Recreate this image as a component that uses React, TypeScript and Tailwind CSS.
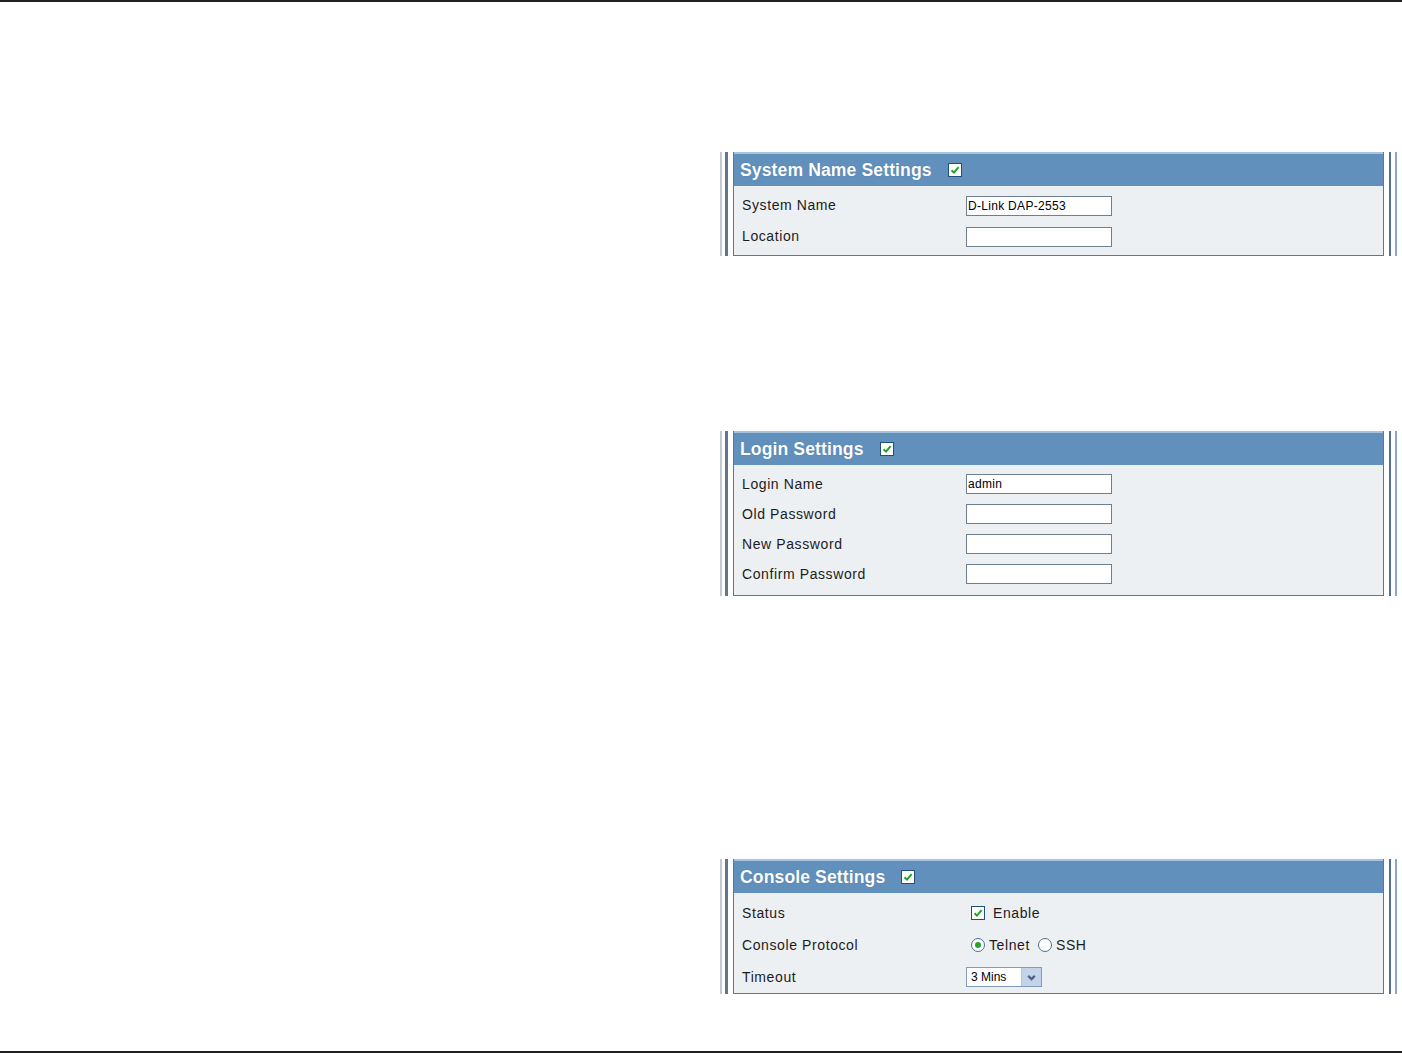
import type { ReactNode } from 'react'

const font = { fontFamily: '"Liberation Sans", Arial, sans-serif' }

function Check() {
  return (
    <span className="inline-flex h-[14px] w-[14px] items-center justify-center border border-[#1f4f7a] bg-white">
      <svg viewBox="0 0 10 10" className="h-[10px] w-[10px]">
        <path d="M1.5 5.2 L4 7.6 L8.6 2.2" fill="none" stroke="#1fa31f" strokeWidth="2" />
      </svg>
    </span>
  )
}

function Radio({ on }: { on?: boolean }) {
  return (
    <span className="inline-flex h-[14px] w-[14px] items-center justify-center rounded-full border border-[#4d6f8f] bg-white">
      {on && <span className="h-[6px] w-[6px] rounded-full bg-[#28a428]" />}
    </span>
  )
}

function TextBox({ value = '' }: { value?: string }) {
  return (
    <div className="flex h-[20px] w-[146px] items-center border border-[#6d7f90] bg-white px-[1px] text-[12px] tracking-[0.3px] text-black">
      {value}
    </div>
  )
}

function Row({ label, h, children }: { label: string; h: string; children: ReactNode }) {
  return (
    <div className={`flex items-center ${h}`}>
      <div className="w-[232px] pl-[8px] text-[14px] tracking-[0.6px] text-[#1c1c1c]">{label}</div>
      {children}
    </div>
  )
}

function Panel({ title, pad, children }: { title: string; pad: string; children: ReactNode }) {
  return (
    <div className="flex w-[678px]">
      {/* left rails */}
      <div className="flex w-[13px] shrink-0">
        <div className="w-[2px] bg-[#c3cad1]" />
        <div className="w-[3px]" />
        <div className="w-[3px] bg-[#63768a]" />
        <div className="flex-1" />
      </div>
      <div className="flex w-[651px] shrink-0 flex-col border-x border-b border-[#4f7ba6]">
        <div className="flex h-[34px] items-center gap-[16px] border-t-2 border-[#a6c4de] bg-[#6190bd] pl-[6px] text-[17.6px] font-bold tracking-[0.1px] text-white [text-shadow:0_0_1px_#3c6a96]">
          <span>{title}</span>
          <Check />
        </div>
        <div className={`flex flex-col bg-[#edf0f3] ${pad}`}>{children}</div>
      </div>
      {/* right rails */}
      <div className="flex w-[14px] shrink-0">
        <div className="w-[5px]" />
        <div className="w-[2px] bg-[#56728f]" />
        <div className="w-[4px]" />
        <div className="w-[2px] bg-[#86a9cc]" />
      </div>
    </div>
  )
}

export default function App() {
  return (
    <div className="flex h-[1054px] w-full flex-col bg-white" style={font}>
      <div className="h-[2px] bg-[#231f20]" />
      <div className="flex flex-1 flex-col pl-[720px]">
        <div className="mt-[150px]">
          <Panel title="System Name Settings" pad="pt-[4px] pb-[3px]">
            <Row label="System Name" h="h-[31px]">
              <TextBox value="D-Link DAP-2553" />
            </Row>
            <Row label="Location" h="h-[31px]">
              <TextBox />
            </Row>
          </Panel>
        </div>

        <div className="mt-[175px]">
          <Panel title="Login Settings" pad="pt-[4px] pb-[6px]">
            <Row label="Login Name" h="h-[30px]">
              <TextBox value="admin" />
            </Row>
            <Row label="Old Password" h="h-[30px]">
              <TextBox />
            </Row>
            <Row label="New Password" h="h-[30px]">
              <TextBox />
            </Row>
            <Row label="Confirm Password" h="h-[30px]">
              <TextBox />
            </Row>
          </Panel>
        </div>

        <div className="mt-[263px]">
          <Panel title="Console Settings" pad="pt-[4px]">
            <Row label="Status" h="h-[32px]">
              <div className="flex items-center gap-[8px] pl-[5px] text-[14px] tracking-[0.6px] text-[#1c1c1c]">
                <Check />
                <span>Enable</span>
              </div>
            </Row>
            <Row label="Console Protocol" h="h-[32px]">
              <div className="flex items-center pl-[5px] text-[14px] tracking-[0.6px] text-[#1c1c1c]">
                <Radio on />
                <span className="ml-[4px]">Telnet</span>
                <span className="ml-[8px] flex"><Radio /></span>
                <span className="ml-[4px]">SSH</span>
              </div>
            </Row>
            <Row label="Timeout" h="h-[32px]">
              <div className="flex h-[20px] w-[76px] items-center border border-[#7f9db9] bg-white text-[12px] text-black">
                <span className="flex-1 pl-[4px]">3 Mins</span>
                <span className="flex h-[18px] w-[20px] items-center justify-center border-l border-[#b4c6dc] bg-[#c3d3ea]">
                  <svg viewBox="0 0 10 10" className="h-[11px] w-[11px]">
                    <path d="M2 3.5 L5 6.5 L8 3.5" fill="none" stroke="#4d6185" strokeWidth="2" />
                  </svg>
                </span>
              </div>
            </Row>
          </Panel>
        </div>
      </div>
      <div className="mb-[1px] h-[2px] bg-[#231f20]" />
    </div>
  )
}
